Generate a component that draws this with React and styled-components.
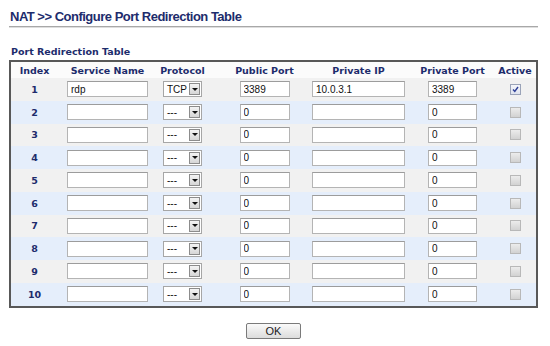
import React from "react";
import styled, { createGlobalStyle } from "styled-components";

const GlobalStyle = createGlobalStyle`
  body {
    margin: 0;
    background: #ffffff;
    font-family: "Liberation Sans", Arial, sans-serif;
  }
`

const NAVY = "#1d2c6c";
const COLUMNS = [
  { w: 47 },
  { w: 99 },
  { w: 51 },
  { w: 98, pad: 15 },
  { w: 105 },
  { w: 83 },
  { w: 42 },
];
const template = COLUMNS.map((c) => `${c.w}px`).join(" ");

const Page = styled.div`
  width: 529px;
  padding: 9px 12px 0 9px;
`
const Title = styled.h1`
  margin: 0 0 0 1px;
  font-size: 13px;
  line-height: 15px;
  font-weight: bold;
  letter-spacing: -0.5px;
  color: ${NAVY};
`
const Rule = styled.div`
  margin-top: 2px;
  border-top: 1px solid #a8a8a8;
  border-bottom: 1px solid #dedede;
`
const SubTitle = styled.h2`
  margin: 18px 0 3px 2px;
  font-family: "DejaVu Sans", Verdana, sans-serif;
  font-size: 9.5px;
  line-height: 11px;
  font-weight: bold;
  color: ${NAVY};
`
const Table = styled.div`
  display: flex;
  flex-direction: column;
  border: 2px solid #585858;
`
const Row = styled.div`
  display: grid;
  grid-template-columns: ${template};
  height: ${(p) => (p.$head ? "16px" : "22.75px")};
  background: ${(p) => (p.$head ? "#fbfbfb" : p.$alt ? "#e5eefb" : "#f1f1f1")};
`
const Cell = styled.div`
  display: flex;
  align-items: center;
  justify-content: center;
  padding-left: ${(p) => p.$pad || 0}px;
  font-family: "DejaVu Sans", Verdana, sans-serif;
  font-size: 9.5px;
  font-weight: bold;
  color: ${NAVY};
  white-space: nowrap;
`
const TextBox = styled.input`
  box-sizing: border-box;
  width: ${(p) => p.$w}px;
  height: 16px;
  margin: 0;
  padding: 0 3px;
  border: 1px solid #b4b4b4;
  border-top-color: #9c9c9c;
  background: #ffffff;
  font-family: "Liberation Sans", Arial, sans-serif;
  font-size: 10px;
  color: #111;
  outline: none;
`
const Select = styled.div`
  box-sizing: border-box;
  width: 39px;
  height: 16px;
  display: flex;
  align-items: center;
  justify-content: space-between;
  padding: 0 1px 0 3px;
  border: 1px solid #a6a6a6;
  background: #ffffff;
  font-family: "Liberation Sans", Arial, sans-serif;
  font-size: 10px;
  font-weight: normal;
  color: #111;
`
const Arrow = styled.span`
  box-sizing: border-box;
  width: 11px;
  height: 12px;
  display: flex;
  align-items: center;
  justify-content: center;
  border: 1px solid #8c8c8c;
  background: linear-gradient(#f4f4f4, #d6d6d6);
  &::after {
    content: "";
    border-left: 3px solid transparent;
    border-right: 3px solid transparent;
    border-top: 3px solid #111;
  }
`
const Check = styled.span`
  box-sizing: border-box;
  width: 11px;
  height: 11px;
  display: flex;
  align-items: center;
  justify-content: center;
  border: 1px solid ${(p) => (p.$on ? "#9aa3b8" : "#b8b8b8")};
  background: ${(p) =>
    p.$on ? "linear-gradient(#f4f6fb, #dfe3ee)" : "linear-gradient(#ececec, #d2d2d2)"};
`
const Footer = styled.div`
  display: flex;
  justify-content: center;
  padding-top: 15px;
`
const Button = styled.button`
  box-sizing: border-box;
  width: 55px;
  height: 16px;
  padding: 0;
  border: 1px solid #7a7a7a;
  border-radius: 2px;
  background: linear-gradient(#fafafa, #dcdcdc);
  font-family: "Liberation Sans", Arial, sans-serif;
  font-size: 11px;
  line-height: 14px;
  color: #222;
`

const HEADERS = ["Index", "Service Name", "Protocol", "Public Port", "Private IP", "Private Port", "Active"];

const rows = Array.from({ length: 10 }, (_, i) =>
  i === 0
    ? { service: "rdp", protocol: "TCP", pub: "3389", ip: "10.0.3.1", priv: "3389", active: true }
    : { service: "", protocol: "---", pub: "0", ip: "", priv: "0", active: false }
);

const App = () => {
  return (
    <Page>
      <GlobalStyle />
      <Title>NAT &gt;&gt; Configure Port Redirection Table</Title>
      <Rule />
      <SubTitle>Port Redirection Table</SubTitle>
      <Table>
        <Row $head>
          {HEADERS.map((h, i) => (
            <Cell key={h} $pad={COLUMNS[i].pad}>{h}</Cell>
          ))}
        </Row>
        {rows.map((r, i) => (
          <Row key={i} $alt={i % 2 === 1}>
            <Cell>{i + 1}</Cell>
            <Cell><TextBox $w={81} defaultValue={r.service} /></Cell>
            <Cell>
              <Select>
                <span>{r.protocol}</span>
                <Arrow />
              </Select>
            </Cell>
            <Cell $pad={COLUMNS[3].pad}><TextBox $w={50} defaultValue={r.pub} /></Cell>
            <Cell><TextBox $w={93} defaultValue={r.ip} /></Cell>
            <Cell><TextBox $w={49} defaultValue={r.priv} /></Cell>
            <Cell>
              <Check $on={r.active}>
                {r.active && (
                  <svg width="7" height="7" viewBox="0 0 7 7">
                    <path d="M1 3.5 L2.8 5.5 L6 1" fill="none" stroke="#2e3f96" strokeWidth="1.4" />
                  </svg>
                )}
              </Check>
            </Cell>
          </Row>
        ))}
      </Table>
      <Footer>
        <Button type="button">OK</Button>
      </Footer>
    </Page>
  );
};

export default App;
